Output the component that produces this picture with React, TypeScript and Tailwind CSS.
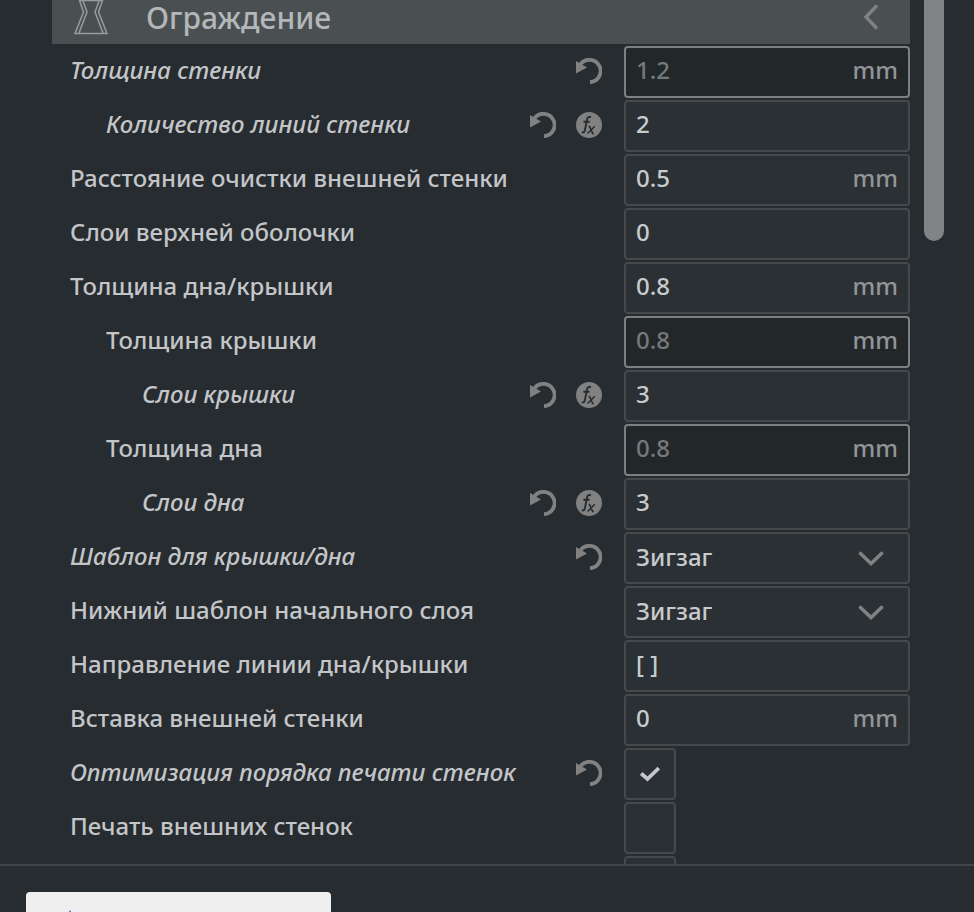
import { useState } from "react";
import clsx from "clsx";

interface Setting {
  id: string;
  label: string;
  level?: number;
  changed?: boolean;
  formula?: boolean;
  type?: "text" | "select" | "checkbox";
  value?: string;
  unit?: string;
  computed?: boolean;
  checked?: boolean;
}

const settings: Setting[] = [
  { id: "wall-thickness", label: "Толщина стенки", changed: true, value: "1.2", unit: "mm", computed: true },
  { id: "wall-line-count", label: "Количество линий стенки", level: 1, changed: true, formula: true, value: "2" },
  { id: "wall-wipe", label: "Расстояние очистки внешней стенки", value: "0.5", unit: "mm" },
  { id: "roofing-layers", label: "Слои верхней оболочки", value: "0" },
  { id: "top-bottom-thickness", label: "Толщина дна/крышки", value: "0.8", unit: "mm" },
  { id: "top-thickness", label: "Толщина крышки", level: 1, value: "0.8", unit: "mm", computed: true },
  { id: "top-layers", label: "Слои крышки", level: 2, changed: true, formula: true, value: "3" },
  { id: "bottom-thickness", label: "Толщина дна", level: 1, value: "0.8", unit: "mm", computed: true },
  { id: "bottom-layers", label: "Слои дна", level: 2, changed: true, formula: true, value: "3" },
  { id: "top-bottom-pattern", label: "Шаблон для крышки/дна", changed: true, type: "select", value: "Зигзаг" },
  { id: "initial-pattern", label: "Нижний шаблон начального слоя", type: "select", value: "Зигзаг" },
  { id: "line-directions", label: "Направление линии дна/крышки", value: "[ ]" },
  { id: "outer-inset", label: "Вставка внешней стенки", value: "0", unit: "mm" },
  { id: "optimize-order", label: "Оптимизация порядка печати стенок", changed: true, type: "checkbox", checked: true },
  { id: "outer-first", label: "Печать внешних стенок", type: "checkbox" },
  { id: "alternate-wall", label: "", type: "checkbox" },
];

const indents = ["pl-[18px]", "pl-[54px]", "pl-[90px]"];

function ResetIcon() {
  return (
    <svg viewBox="0 0 26 26" className="size-[26px]" fill="none">
      <path d="M4.5 6.2A11.2 11.2 0 1 1 14 24.2" stroke="#828181" strokeWidth="3.8" />
      <path d="M0 3V15.5L11 9.5Z" fill="#828181" />
    </svg>
  );
}

function FormulaIcon() {
  return (
    <svg viewBox="0 0 26 26" className="size-[26px]" fill="none" stroke="#272c30">
      <circle cx="13" cy="13" r="13" fill="#828181" stroke="none" />
      <path d="M15 5.2C12.4 4.4 11.4 5.6 11 7.6L9 17.6C8.6 20 7.8 20.8 5.8 20.2M7.4 9.8H13.6" strokeWidth="1.9" />
      <path d="M12.6 14.4H13.6L16.6 21.4H17.8M18.8 14.2L11.6 21.6" strokeWidth="1.5" />
    </svg>
  );
}

function Chevron({ className }: { className?: string }) {
  return (
    <svg viewBox="0 0 26 16" className={clsx("h-4 w-[26px]", className)} fill="none">
      <path d="M2.5 3.5L13 13.5L23.5 3.5" stroke="#828181" strokeWidth="3.6" strokeLinecap="round" />
    </svg>
  );
}

function SettingField({ setting }: { setting: Setting }) {
  const [value, setValue] = useState(setting.value ?? "");
  const [checked, setChecked] = useState(!!setting.checked);

  if (setting.type === "checkbox") {
    return (
      <div className="grid place-items-center">
        <input
          id={setting.id}
          type="checkbox"
          aria-label={setting.label || "Параметр"}
          checked={checked}
          onChange={(e) => setChecked(e.target.checked)}
          className="col-start-1 row-start-1 size-[52px] appearance-none rounded-sm border-2 border-[#45494c] bg-[#2b3034]"
        />
        {checked && (
          <svg viewBox="0 0 20 16" className="pointer-events-none col-start-1 row-start-1 h-4 w-5" fill="none">
            <path d="M1.2 7.5L7.5 13L18.8 2" stroke="#c3c5c8" strokeWidth="3.8" />
          </svg>
        )}
      </div>
    );
  }

  if (setting.type === "select") {
    return (
      <div className="grid w-full items-center">
        <select
          id={setting.id}
          value={value}
          onChange={(e) => setValue(e.target.value)}
          className="col-start-1 row-start-1 h-[52px] w-full appearance-none rounded-sm border-2 border-[#45494c] bg-[#2b3034] px-[10px] pb-[2px] text-[#c8cbcd]"
        >
          <option>Зигзаг</option>
          <option>Линии</option>
        </select>
        <Chevron className="pointer-events-none col-start-1 row-start-1 mr-[26px] justify-self-end" />
      </div>
    );
  }

  return (
    <div
      className={clsx(
        "flex h-[52px] w-full items-center rounded-sm border-2 px-[10px] pb-1",
        setting.computed ? "border-[#7c8082] bg-[#22272a]" : "border-[#45494c] bg-[#2b3034]",
      )}
    >
      <input
        id={setting.id}
        value={value}
        onChange={(e) => setValue(e.target.value)}
        className={clsx(
          "h-8 min-w-0 flex-1 bg-transparent outline-none",
          setting.computed ? "text-[#76797b]" : "text-[#c8cbcd]",
        )}
      />
      {setting.unit && <span className="text-[#929597]">{setting.unit}</span>}
    </div>
  );
}

function SettingRow({ setting }: { setting: Setting }) {
  return (
    <div className="flex shrink-0 items-center">
      <label
        htmlFor={setting.id}
        className={clsx(
          "min-w-0 flex-1 truncate pb-1 leading-9 text-[#c3c5c8]",
          indents[setting.level ?? 0],
          setting.changed && "italic",
        )}
      >
        {setting.label}
      </label>
      <div className="flex gap-5 pr-[22px] pb-[2px]">
        {setting.changed && (
          <button type="button" aria-label="Сбросить">
            <ResetIcon />
          </button>
        )}
        {setting.formula && (
          <button type="button" aria-label="Вернуть формулу">
            <FormulaIcon />
          </button>
        )}
      </div>
      <div className="flex w-1/3 shrink-0">
        <SettingField setting={setting} />
      </div>
    </div>
  );
}

export default function App() {
  return (
    <div className="flex h-screen flex-col overflow-hidden bg-[#272c30] font-['Noto_Sans',sans-serif] text-2xl font-medium">
      <main className="flex min-h-0 flex-1 items-start overflow-hidden pl-[52px] pr-[30px]">
        <section className="flex min-w-0 flex-1 flex-col gap-[2px]">
          {/* Category header */}
          <button type="button" className="flex h-11 w-full items-center bg-[#4a4f51] pr-8 pl-[22px] text-[#b4b7b9]">
            <svg viewBox="0 0 34 36" className="mb-[10px] h-9 w-[34px]" fill="none" stroke="#999c9d" strokeWidth="1.5">
              <path d="M5.5 1.5H28.5L24.5 13L33 34.5H1L9.5 13Z" />
              <path d="M9 2L13 13L5 34M25 2L21 13L29 34" />
            </svg>
            <span className="ml-[38px] flex-1 pb-2 text-left text-3xl leading-9">Ограждение</span>
            <svg viewBox="0 0 16 26" className="mb-[10px] h-[26px] w-4" fill="none">
              <path d="M14 2.5L4 13L14 23.5" stroke="#828181" strokeWidth="3.4" strokeLinecap="round" />
            </svg>
          </button>

          {settings.map((s) => (
            <SettingRow key={s.id} setting={s} />
          ))}
        </section>

        {/* Scrollbar */}
        <div className="ml-[14px] h-[241px] w-5 shrink-0 rounded-b-full bg-[#808485]" />
      </main>

      {/* Footer */}
      <footer className="h-12 shrink-0 overflow-hidden border-t-2 border-[#404548] px-[26px] pt-[26px]">
        <button type="button" aria-label="Рекомендованный" className="flex h-16 w-[305px] items-start rounded-sm bg-[#efefef] pt-[18px] pl-[39px]">
          <svg viewBox="0 0 10 20" className="h-5 w-[10px]">
            <path d="M5 0L10 10L5 20L0 10Z" fill="#2a57b8" />
          </svg>
        </button>
      </footer>
    </div>
  );
}
